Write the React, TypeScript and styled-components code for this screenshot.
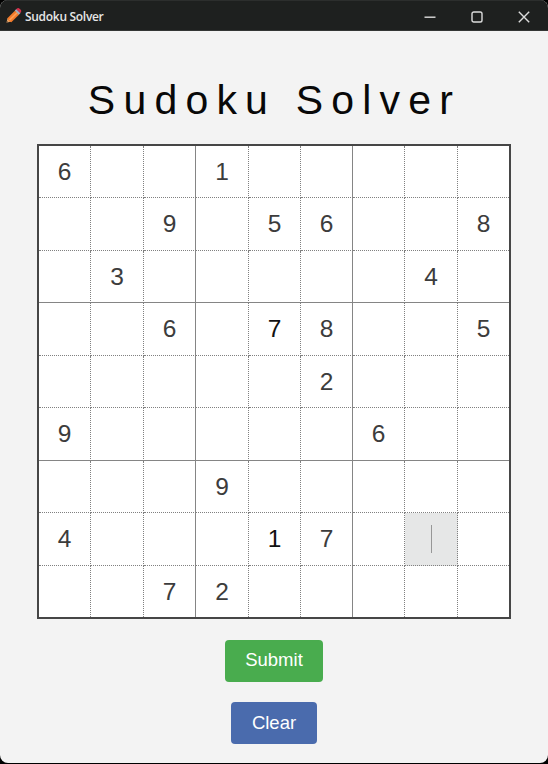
import React from "react";
import styled, { createGlobalStyle } from "styled-components";

const GlobalStyle = createGlobalStyle`
  * { box-sizing: border-box; }
  body { margin: 0; background: #000; overflow: hidden; }
`;

const Window = styled.div`
  width: 548px;
  height: 763px;
  display: flex;
  flex-direction: column;
  overflow: hidden;
  border-radius: 8px;
  background: #f3f3f3;
  font-family: "Liberation Sans", Arial, sans-serif;
`;

const TitleBar = styled.header`
  height: 31px;
  flex: none;
  display: flex;
  align-items: center;
  padding: 0 1px 0 5px;
  background: #1e201f;
  border-top: 1px solid #2c2e2d;
  border-bottom: 1px solid #343635;
`;

const Caption = styled.span`
  flex: 1;
  margin: 2px 0 0 3px;
  color: #e6e6e6;
  font: 600 12px/16px "Open Sans", "Noto Sans", sans-serif;
  letter-spacing: -0.3px;
`;

const WindowButton = styled.button`
  width: 47px;
  height: 29px;
  display: grid;
  place-items: center;
  padding: 2px 0 0;
  border: 0;
  background: none;
  color: #dcdcdc;
`;

const Content = styled.main`
  flex: 1;
  display: flex;
  flex-direction: column;
  align-items: center;
`;

const Heading = styled.h1`
  margin: 46px 0 20px;
  padding-left: 1px;
  font-size: 41px;
  line-height: 47px;
  font-weight: 400;
  letter-spacing: 0.2em;
  color: #080808;
  white-space: nowrap;
`;

const Board = styled.div`
  display: grid;
  grid-template-columns: 52px 53px 52px 53px 52px 52px 52px 53px 51px;
  grid-template-rows: 52px 53px 52px 53px 52px 53px 52px 53px 51px;
  border: 2px solid #464646;
  background: #fff;
`;

const line = (index: number) =>
  index === 8 ? "0" : index % 3 === 2 ? "1px solid #858585" : "1px dotted #808080";

const Cell = styled.div<{ $row: number; $col: number; $active: boolean; $dark: boolean }>`
  display: grid;
  place-items: center;
  border-right: ${(p) => line(p.$col)};
  border-bottom: ${(p) => line(p.$row)};
  background: ${(p) => (p.$active ? "#e6e7e7" : "#fff")};
  color: ${(p) => (p.$dark ? "#111" : "#3c3c3c")};
  font-size: 24.5px;
  line-height: 28px;
`;

const Caret = styled.span`
  width: 1px;
  height: 28px;
  margin-left: 1px;
  background: #979797;
`;

const ActionButton = styled.button<{ $color: string; $width: number }>`
  width: ${(p) => p.$width}px;
  height: 42px;
  margin-top: 21px;
  padding: 0 0 2px;
  border: 0;
  border-radius: 4px;
  background: ${(p) => p.$color};
  color: #fff;
  font: 18.5px "Liberation Sans", Arial, sans-serif;

  & + & {
    margin-top: 20px;
    padding-bottom: 0;
  }
`;

const rows = [
  "6..1.....",
  "..9.56..8",
  ".3.....4.",
  "..6.78..5",
  ".....2...",
  "9.....6..",
  "...9.....",
  "4...17...",
  "..72.....",
];

const darkCells = ["3-4", "7-4"];

function Pencil() {
  return (
    <svg width="17" height="18" viewBox="0 0 17 18">
      <path d="M1.5 15.8 2.6 11 6.2 14.6z" fill="#e8a868" />
      <path d="m1.5 15.8.5-1.9 1.3 1.3z" fill="#5b4038" />
      <path d="m2.4 11.2 7.7-7.8 4.1 4.1-7.9 7.7-2.3-.9z" fill="#f27a2b" />
      <path d="m4 12.6 7.8-7.7 1.1 1.1-7.8 7.7z" fill="#ff9f55" />
      <path d="m9.8 3.6 1.6-1.6 4.1 4.1-1.6 1.6z" fill="#9eb1bd" />
      <path d="m11.2 2.3.7-.7c.8-.8 1.9-.7 2.7.1l1.1 1.1c.8.8.8 1.8 0 2.6l-.6.6z" fill="#d92f4b" />
    </svg>
  );
}

export default function App() {
  return (
    <>
      <GlobalStyle />
      <Window>
        <TitleBar>
          <Pencil />
          <Caption>Sudoku Solver</Caption>
          <WindowButton aria-label="Minimize">
            <svg width="12" height="12" viewBox="0 0 12 12" stroke="currentColor" strokeWidth="1.4">
              <path d="M.5 6.2h11" />
            </svg>
          </WindowButton>
          <WindowButton aria-label="Maximize">
            <svg width="12" height="12" viewBox="0 0 12 12" fill="none" stroke="currentColor" strokeWidth="1.4">
              <rect x="1" y="1" width="10" height="10" rx="1.8" />
            </svg>
          </WindowButton>
          <WindowButton aria-label="Close">
            <svg width="12" height="12" viewBox="0 0 12 12" stroke="currentColor" strokeWidth="1.4">
              <path d="m.8.8 10.4 10.4M11.2.8.8 11.2" />
            </svg>
          </WindowButton>
        </TitleBar>
        <Content>
          <Heading>Sudoku Solver</Heading>
          <Board>
            {rows.flatMap((values, row) =>
              [...values].map((value, col) => {
                const active = row === 7 && col === 7;
                return (
                  <Cell
                    key={`${row}-${col}`}
                    $row={row}
                    $col={col}
                    $active={active}
                    $dark={darkCells.includes(`${row}-${col}`)}
                  >
                    {active ? <Caret /> : value === "." ? null : value}
                  </Cell>
                );
              }),
            )}
          </Board>
          <ActionButton $color="#49ac4e" $width={98}>Submit</ActionButton>
          <ActionButton $color="#4a6bad" $width={86}>Clear</ActionButton>
        </Content>
      </Window>
    </>
  );
}
